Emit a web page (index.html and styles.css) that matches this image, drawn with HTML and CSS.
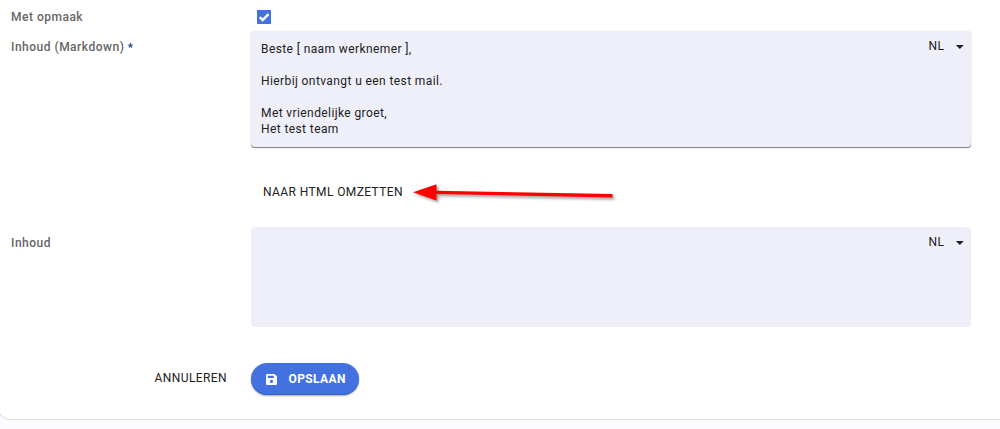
FILE: index.html
```
<!doctype html>
<html lang="nl">
<head>
	<meta charset="utf-8">
	<title>Bericht</title>
	<link rel="stylesheet" href="styles.css">
</head>
<body>

	<form class="card">

		<div class="row row-check">
			<div class="label">Met opmaak</div>
			<span class="checkbox">
				<svg width="14" height="14" viewBox="0 0 14 14"><path d="M2.7 7.2l3 2.9 5.8-6" fill="none" stroke="#fff" stroke-width="2.4"/></svg>
			</span>
		</div>

		<div class="row">
			<div class="label">Inhoud (Markdown) <span class="required">*</span></div>
			<div class="field field-active">
				<div class="text">Beste [ naam werknemer ],

Hierbij ontvangt u een test mail.

Met vriendelijke groet,
Het test team</div>
				<div class="lang">NL <span class="caret"></span></div>
			</div>
		</div>

		<div class="convert">
			<span class="btn-text">NAAR HTML OMZETTEN</span>
			<svg class="arrow" width="210" height="30" viewBox="0 0 210 30">
				<path d="M3 12.3L26.5 4.2V10.7L202.5 14V17.4L26.5 14V20.6Z" fill="#f00"/>
			</svg>
		</div>

		<div class="row">
			<div class="label">Inhoud</div>
			<div class="field field-empty">
				<div class="text"></div>
				<div class="lang">NL <span class="caret"></span></div>
			</div>
		</div>

		<div class="actions">
			<span class="btn-text cancel">ANNULEREN</span>
			<span class="btn-save">
				<svg width="11" height="11" viewBox="0 0 11 11"><path fill="#fff" fill-rule="evenodd" d="M1.2 0H8.5L11 2.5V9.8Q11 11 9.8 11H1.2Q0 11 0 9.8V1.2Q0 0 1.2 0ZM1.8 1.8V4H7.8V1.8ZM5.5 5.8A1.6 1.6 0 1 0 5.5 9A1.6 1.6 0 1 0 5.5 5.8Z"/></svg>
				<span>OPSLAAN</span>
			</span>
		</div>

	</form>

</body>
</html>
```
FILE: styles.css
```
* { box-sizing: border-box; }

body {
  margin: 0;
  height: 429px;
  overflow: hidden;
  background: #fcfbfe;
  color: #212121;
  font: 12px/16px Roboto, sans-serif;
  letter-spacing: 0.4px;
}

.card {
  width: 1020px;
  height: 420px;
  margin-left: -2px;
  padding-left: 12px;
  background: #fff;
  border: 1px solid #dfdfec;
  border-top: 0;
  border-radius: 0 0 12px 12px;
}

.row { display: flex; }
.row-check { height: 31px; }
.label { width: 240px; padding-top: 8px; color: #666; font-weight: 500; letter-spacing: 0.5px; }
.row-check .label { padding-top: 9px; }
.required { color: #0d3a8c; font-size: 11px; font-weight: 900; line-height: 1; }

.checkbox { width: 14px; height: 14px; margin: 10px 0 0 6px; background: #4372e0; }
.checkbox svg { display: block; }

.field { display: flex; justify-content: space-between; width: 720px; background: #efeff9; border-radius: 4px; }
.field-active { height: 116px; margin-bottom: 1px; box-shadow: 0 1px 1px -0.5px rgba(0,0,0,0.5), 0 0 2px rgba(0,0,0,0.06); }
.field-empty { height: 100px; }
.text { padding: 10px; white-space: pre-wrap; }
.lang { display: flex; width: 42.5px; padding-top: 7px; }
.caret { margin: 7px 0 0 11.5px; width: 8px; height: 4px; background: #212121; clip-path: polygon(0 0, 100% 0, 50% 100%); }

.convert { display: flex; height: 79px; padding: 36px 0 0 252px; }
.arrow { margin: -4.5px 0 0 7px; filter: drop-shadow(2px 2px 1.5px rgba(0,0,0,0.4)); }

.actions { display: flex; align-items: center; height: 32px; margin-top: 36px; }
.cancel { width: 240px; padding: 0 24px 2px 0; text-align: right; }
.btn-save { display: flex; align-items: center; width: 108px; height: 32px; padding-left: 15px; gap: 11.5px; background: #4372e0; border-radius: 16px; color: #fff; font-weight: 700; box-shadow: 0 1px 2px rgba(0,0,0,0.35), inset 0 -1px 0 #3560c8; }
```
